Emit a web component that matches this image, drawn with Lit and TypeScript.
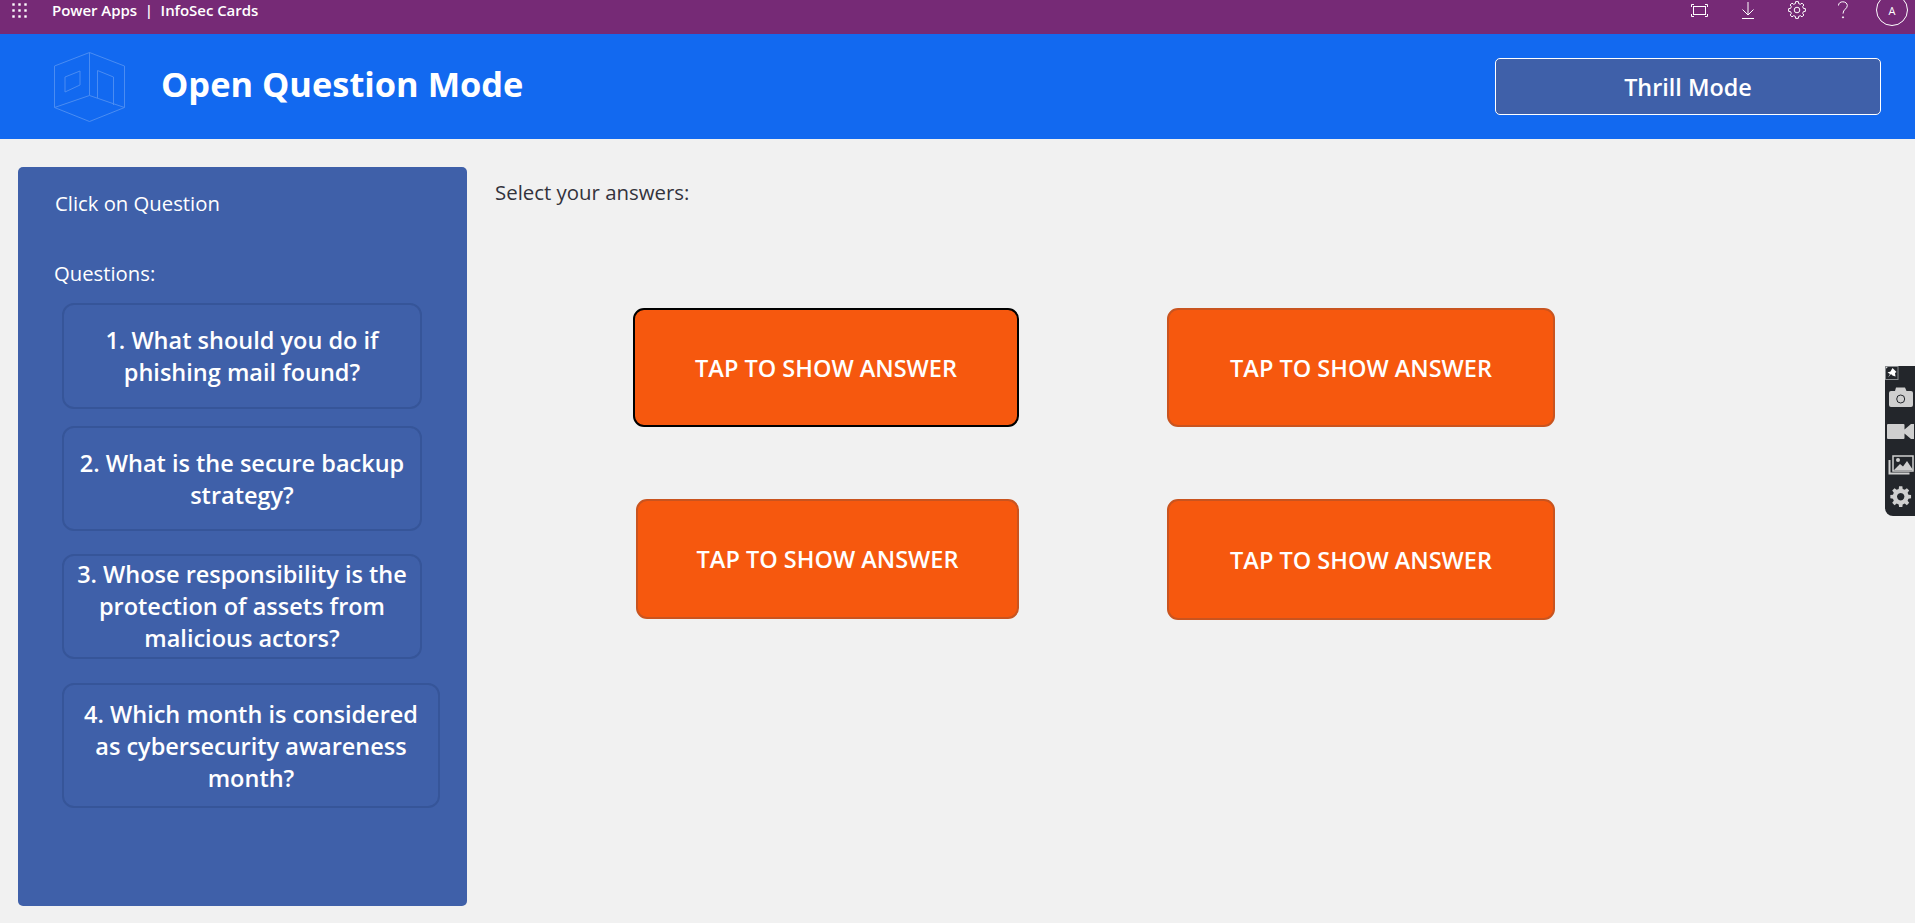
import { LitElement, html, css, svg } from "lit";
import { customElement } from "lit/decorators.js";

function gear(cx: number, cy: number, r: number, R: number, n = 8) {
  let d = "";
  const step = (Math.PI * 2) / n;
  for (let i = 0; i < n; i++) {
    const a = i * step - Math.PI / 2;
    const pts = [
      [r, a - step * 0.32],
      [R, a - step * 0.2],
      [R, a + step * 0.2],
      [r, a + step * 0.32],
    ];
    for (const [rad, an] of pts) {
      d += `${d ? "L" : "M"}${(cx + rad * Math.cos(an)).toFixed(2)} ${(cy + rad * Math.sin(an)).toFixed(2)}`;
    }
  }
  return d + "Z";
}

const QUESTIONS = [
  { text: "1. What should you do if phishing mail found?", cls: "q1" },
  { text: "2. What is the secure backup strategy?", cls: "q2" },
  { text: "3. Whose responsibility is the protection of assets from malicious actors?", cls: "q3" },
  { text: "4. Which month is considered as cybersecurity awareness month?", cls: "q4" },
];

@customElement("app-root")
export class AppRoot extends LitElement {
  static styles = css`
    :host {
      display: block;
      width: 100%;
      height: 923px;
      overflow: hidden;
      position: relative;
      background: #f1f1f1;
      font-family: "Open Sans", "Noto Sans", sans-serif;
    }
    .topbar {
      height: 34px;
      box-sizing: border-box;
      background: #762a76;
      color: #fff;
      display: flex;
      align-items: center;
      padding: 0 0 14px 12px;
      overflow: hidden;
    }
    .waffle { width: 17px; height: 15px; margin-right: 23px; }
    .brand { font-size: 15px; font-weight: 600; letter-spacing: -0.05px; white-space: pre; }
    .tools { margin-left: auto; display: flex; align-items: center; }
    .tools svg { display: block; }
    .i-fit { width: 17px; height: 13px; margin-right: 33px; }
    .i-down { width: 14px; height: 17px; margin-right: 33px; }
    .i-gear { width: 18px; height: 18px; margin-right: 31px; }
    .i-help { width: 12px; height: 18px; margin-right: 27px; }
    .avatar {
      width: 32px;
      height: 32px;
      box-sizing: border-box;
      border: 1px solid #fff;
      border-radius: 50%;
      display: flex;
      align-items: center;
      justify-content: center;
      font-size: 11px;
      margin-right: 7px;
      flex: none;
    }
    .header {
      height: 105px;
      background: #1269f0;
      display: flex;
      align-items: center;
      padding: 0 34px 0 54px;
      box-sizing: border-box;
    }
    .logo { width: 71px; height: 70px; margin-right: 36px; flex: none; margin-top: 1px; }
    h1 { margin: 0 0 6px; font-size: 34.4px; font-weight: 700; color: #fff; line-height: 48px; }
    .thrill {
      margin-left: auto;
      width: 386px;
      height: 57px;
      box-sizing: border-box;
      background: #3f60a9;
      border: 1px solid #fff;
      border-radius: 5px;
      color: #fff;
      font: 600 23.4px "Open Sans", sans-serif;
      display: flex;
      align-items: center;
      justify-content: center;
    }
    .body { display: flex; padding: 28px 0 0 18px; }
    .side {
      width: 449px;
      height: 739px;
      box-sizing: border-box;
      background: #3f60a9;
      border-radius: 5px;
      color: #fff;
      padding: 22px 0 0 44px;
      flex: none;
    }
    .click { font-size: 20.3px; line-height: 28px; margin-left: -7px; margin-bottom: 42px; }
    .qs-label { font-size: 20.3px; line-height: 28px; margin-left: -8px; margin-bottom: 16px; }
    .q {
      box-sizing: border-box;
      width: 360px;
      border: 2px solid #365599;
      border-radius: 12px;
      display: flex;
      align-items: center;
      justify-content: center;
      text-align: center;
      font-size: 23.5px;
      font-weight: 600;
      line-height: 32px;
    }
    .q span { display: block; }
    .q1 { height: 106px; margin-bottom: 17px; padding: 0 10px; }
    .q2 { height: 105px; margin-bottom: 23px; padding: 0 10px; }
    .q3 { height: 105px; margin-bottom: 24px; padding: 0 10px 2px; }
    .q4 { height: 125px; width: 378px; padding: 0 18px; }
    .main { flex: 1; padding: 11px 0 0 28px; }
    .select { font-size: 20.4px; line-height: 28px; color: #33333c; margin-bottom: 102px; }
    .grid {
      display: grid;
      grid-template-columns: 386px 388px;
      column-gap: 148px;
      row-gap: 72px;
      margin-left: 138px;
    }
    .ans {
      box-sizing: border-box;
      height: 119px;
      background: #f6580e;
      border: 2px solid #c9541f;
      border-radius: 11px;
      color: #fff;
      font-size: 23.5px;
      font-weight: 600;
      display: flex;
      align-items: center;
      justify-content: center;
    }
    .ans.focus { border-color: #000; }
    .ans.c { margin-left: 3px; height: 120px; }
    .ans.d { height: 121px; }
    .widget {
      position: absolute;
      left: 1885px;
      top: 366px;
      width: 30px;
      height: 150px;
      background: #23262b;
      border-radius: 6px 0 0 8px;
    }
    .widget svg { display: block; width: 30px; height: 150px; }
  `;

  render() {
    return html`
      <div class="topbar">
        <svg class="waffle" viewBox="0 0 17 15" fill="#fff">
          ${[1.5, 7.5, 13.5].map((y) =>
            [1.5, 7.5, 13.5].map((x) => svg`<rect x=${x - 1.2} y=${y - 1.2} width="2.4" height="2.4"></rect>`)
          )}
        </svg>
        <span class="brand">Power Apps  |  InfoSec Cards</span>
        <div class="tools">
          <svg class="i-fit" viewBox="0 0 17 13" fill="none" stroke="#fff">
            <rect x="2.5" y="2.5" width="12" height="8"></rect>
            <path d="M.5 3V.5H3M14 .5h2.5V3M.5 10v2.500H3M14 12.500h2.500V10"></path>
          </svg>
          <svg class="i-down" viewBox="0 0 14 17" fill="none" stroke="#fff">
            <path d="M7 0v13M1.500 7.500 7 13l5.500-5.500M1 16.500h12"></path>
          </svg>
          <svg class="i-gear" viewBox="0 0 18 18" fill="none" stroke="#fff">
            <path d=${gear(9, 9, 6.6, 8.5)}></path>
            <circle cx="9" cy="9" r="2.800"></circle>
          </svg>
          <svg class="i-help" viewBox="0 0 12 18" fill="none" stroke="#fff">
            <path d="M1.500 4.500C1.500 2 3.500.8 5.800.8c2.500 0 4.500 1.500 4.500 3.800 0 3.400-4.300 3.700-4.300 8"></path>
            <circle cx="6" cy="16.300" r=".6" fill="#fff"></circle>
          </svg>
          <div class="avatar">A</div>
        </div>
      </div>
      <div class="header">
        <svg class="logo" viewBox="0 0 71 70" fill="none" stroke="#4a8cf2" stroke-width="1">
          <path d="M35.500.5 70.500 14v41.500l-35 14-35-14V14ZM35.500.5v43M35.500 43.500l-35 12M35.500 43.500l35 12"></path>
          <path d="M11 25l15-6v14l-15 7ZM43.500 46V18.500L59.500 25v28"></path>
        </svg>
        <h1>Open Question Mode</h1>
        <div class="thrill">Thrill Mode</div>
      </div>
      <div class="body">
        <div class="side">
          <div class="click">Click on Question</div>
          <div class="qs-label">Questions:</div>
          ${QUESTIONS.map((q) => html`<div class="q ${q.cls}"><span>${q.text}</span></div>`)}
        </div>
        <div class="main">
          <div class="select">Select your answers:</div>
          <div class="grid">
            <div class="ans focus">TAP TO SHOW ANSWER</div>
            <div class="ans">TAP TO SHOW ANSWER</div>
            <div class="ans c">TAP TO SHOW ANSWER</div>
            <div class="ans d">TAP TO SHOW ANSWER</div>
          </div>
        </div>
      </div>
      <div class="widget">
        <svg viewBox="0 0 30 150">
          <rect x=".5" y=".5" width="12.500" height="13" fill="none" stroke="#8a8d90"></rect>
          <path d="M7.500 2l4 4-1.500 1 .5 3.500L7.500 9.500 6 8 3 11.500 5 8 2.500 6.500 5.500 5.500Z" fill="#fff"></path>
          <path d="M4 27a2 2 0 0 1 2-2h4l1-3.500h9l1.500 3.500H26a2 2 0 0 1 2 2v12a2 2 0 0 1-2 2H6a2 2 0 0 1-2-2Z" fill="#cfcfcf"></path>
          <circle cx="15.700" cy="33" r="4" fill="none" stroke="#23262b" stroke-width="1"></circle>
          <path d="M3 58h15.500a1 1 0 0 1 1 1v4.500L26 58h3v15h-3l-6.500-5.500V72a1 1 0 0 1-1 1H3a1 1 0 0 1-1-1V59a1 1 0 0 1 1-1Z" fill="#cfcfcf"></path>
          <path d="M8 90h20v15H8Z" fill="none" stroke="#cfcfcf" stroke-width="1.500"></path>
          <path d="M9 104l6-6 3 2.500 4-5.500 6 9Z" fill="#cfcfcf"></path>
          <circle cx="13" cy="94" r="2" fill="#cfcfcf"></circle>
          <path d="M4.500 94v13.500h20" fill="none" stroke="#cfcfcf" stroke-width="2"></path>
          <path fill-rule="evenodd" d="${gear(15.7, 130.7, 8, 10.5)} M15.700 127a3.700 3.700 0 1 0 .01 0Z" fill="#cfcfcf"></path>
        </svg>
      </div>
    `;
  }
}
